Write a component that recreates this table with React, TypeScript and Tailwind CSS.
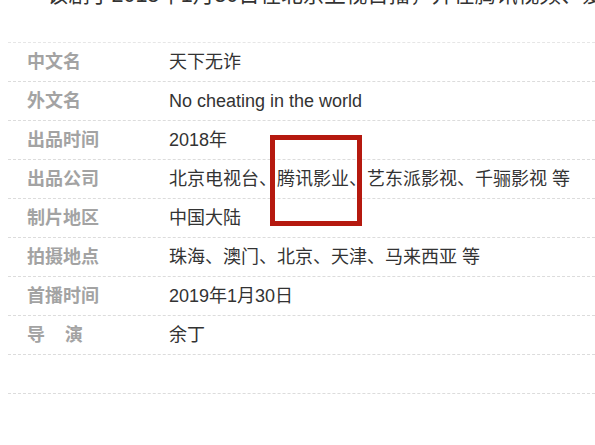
const font = "font-['Liberation_Sans','Noto_Sans_CJK_SC',sans-serif]"

const rows: { label: React.ReactNode; value: string }[] = [
  { label: '中文名', value: '天下无诈' },
  { label: '外文名', value: 'No cheating in the world' },
  { label: '出品时间', value: '2018年' },
  { label: '出品公司', value: '北京电视台、腾讯影业、艺东派影视、千骊影视 等' },
  { label: '制片地区', value: '中国大陆' },
  { label: '拍摄地点', value: '珠海、澳门、北京、天津、马来西亚 等' },
  { label: '首播时间', value: '2019年1月30日' },
  {
    label: (
      <>
        导<span className="ml-[20px]">演</span>
      </>
    ),
    value: '余丁',
  },
]

export default function App() {
  return (
    <div className={`relative w-[595px] h-[445px] overflow-hidden bg-white ${font}`}>
      <p className="-mt-[15px] h-[20px] pl-[47px] whitespace-nowrap text-[21.5px] leading-[20px] text-[#333]">
        该剧于2018年1月30日在北京卫视首播，并在腾讯视频、爱奇艺同步播出
      </p>

      <div className="mt-[37px] ml-[8px] border-t border-dashed border-[#e6e6e6]">
        {rows.map((row, i) => (
          <div
            key={i}
            className="flex h-[39px] items-center border-b border-dashed border-[#dcdcdc]"
          >
            <div className="w-[161px] shrink-0 pl-[19px] text-[18px] font-bold text-[#a3a3a3]">
              {row.label}
            </div>
            <div className="whitespace-nowrap text-[18px] text-[#333]">{row.value}</div>
          </div>
        ))}
        <div className="h-[39px] border-b border-dashed border-[#dcdcdc]" />
      </div>

      <div className="absolute left-[270px] top-[135px] h-[91px] w-[92px] border-[5px] border-[#b5190f]" />
    </div>
  )
}
